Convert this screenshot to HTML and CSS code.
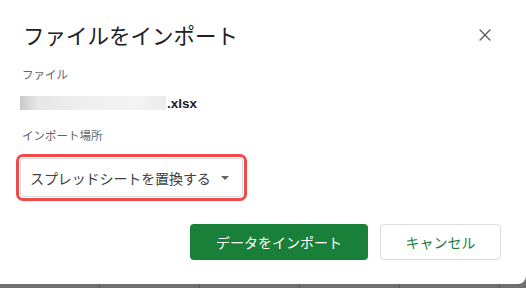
FILE: index.html
```html
<!DOCTYPE html>
<html lang="ja">
<head>
<meta charset="utf-8">
<title>ファイルをインポート</title>
<link rel="stylesheet" href="styles.css">
</head>
<body>
<div class="screen">
  <div class="dialog">
    <div class="header">
      <h1 class="title">ファイルをインポート</h1>
      <button class="close" aria-label="閉じる">
        <svg width="12" height="12" viewBox="0 0 12 12"><path d="M0.6 0.6 L11.4 11.4 M11.4 0.6 L0.6 11.4" stroke="#5f6368" stroke-width="1.4" fill="none"/></svg>
      </button>
    </div>
    <div class="label label-file">ファイル</div>
    <div class="file-row"><span class="blur"></span><span class="ext">.xlsx</span></div>
    <div class="label label-loc">インポート場所</div>
    <div class="highlight">
      <div class="select">
        <span class="select-text">スプレッドシートを置換する</span>
        <span class="caret"></span>
      </div>
    </div>
    <div class="actions">
      <button class="btn btn-primary">データをインポート</button>
      <button class="btn btn-secondary">キャンセル</button>
    </div>
  </div>
</div>
</body>
</html>
```
FILE: styles.css
```css
* { box-sizing: border-box; }
html, body { margin: 0; padding: 0; }
body {
  font-family: "Noto Sans CJK JP", "Noto Sans", sans-serif;
  background: #6f6f6f;
}
.screen {
  width: 526px;
  height: 288px;
  overflow: hidden;
  background-color: #6f6f6f;
  background-image: repeating-linear-gradient(to right, transparent 0, transparent 99px, #5a5a5a 99px, #5a5a5a 100px);
}
.dialog {
  width: 526px;
  height: 284px;
  background: #fff;
  border-radius: 0 0 8px 0;
  padding: 20px 0 0 22px;
  display: flex;
  flex-direction: column;
}
.header {
  height: 30px;
  display: flex;
  align-items: center;
  justify-content: space-between;
  padding-right: 35px;
}
.title {
  margin: 0;
  font-size: 21.5px;
  line-height: 30px;
  font-weight: 400;
  color: #202124;
  padding-left: 1px;
}
.close {
  border: 0;
  background: none;
  padding: 0;
  width: 12px;
  height: 12px;
  display: flex;
}
.label {
  font-size: 11.5px;
  line-height: 16px;
  color: #5f6368;
}
.label-file { margin-top: 16px; }
.file-row {
  margin-top: 14px;
  height: 14px;
  display: flex;
  align-items: center;
  margin-left: -2px;
}
.blur {
  width: 146px;
  height: 14px;
  background: linear-gradient(to right, #c9c9c9 0%, #e6e6e6 12%, #efefef 45%, #f3f3f3 80%, #ececec 100%);
}
.ext {
  font-family: "Liberation Sans", Arial, sans-serif;
  font-weight: 700;
  font-size: 13.5px;
  color: #202124;
  margin-left: 1px;
}
.label-loc { margin-top: 17px; }
.highlight {
  margin-top: 11px;
  margin-left: -6px;
  width: 231px;
  height: 47px;
  border: 3px solid #f04b4b;
  border-radius: 7px;
  padding: 1px;
}
.select {
  height: 100%;
  border: 1px solid #dadce0;
  border-radius: 3px;
  display: flex;
  align-items: center;
  padding-left: 9px;
}
.select-text {
  font-size: 14px;
  color: #3c4043;
  letter-spacing: -0.1px;
}
.caret {
  margin-left: 10px;
  width: 0;
  height: 0;
  border-left: 4px solid transparent;
  border-right: 4px solid transparent;
  border-top: 4px solid #5f6368;
}
.actions {
  margin-top: 23px;
  display: flex;
  justify-content: flex-end;
  gap: 12px;
  padding-right: 25px;
}
.btn {
  height: 36px;
  border-radius: 4px;
  font-family: "Noto Sans CJK JP", "Noto Sans", sans-serif;
  font-size: 14px;
  padding: 0;
  display: flex;
  align-items: center;
  justify-content: center;
}
.btn-primary {
  width: 178px;
  background: #188038;
  color: #fff;
  border: 0;
}
.btn-secondary {
  width: 121px;
  background: #fff;
  color: #188038;
  border: 1px solid #dadce0;
}
```
